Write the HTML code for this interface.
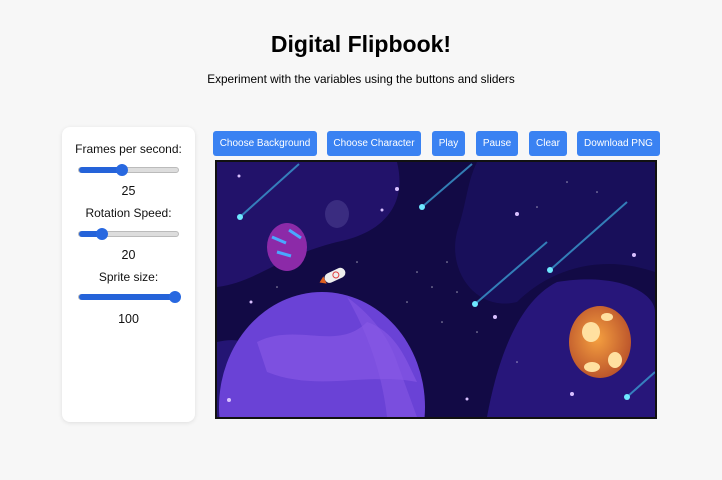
<!DOCTYPE html>
<html style="overflow:hidden"><head><style>
html,body{margin:0;width:722px;height:480px;overflow:hidden}
body{background:#f7f7f7;font-family:"Liberation Sans",Arial,sans-serif;position:relative}
h1{position:absolute;top:31px;left:0;width:722px;text-align:center;margin:0;font-size:23px;font-weight:bold;color:#000}
.sub{position:absolute;top:72px;left:0;width:722px;text-align:center;font-size:11.8px}
.panel{position:absolute;left:62px;top:127px;width:133px;height:295px;background:#fff;border-radius:8px;box-shadow:0 1px 4px rgba(0,0,0,.1)}
.t{position:absolute;left:0;width:133px;text-align:center;font-size:12px;color:#111}
.v{font-size:12.5px}
.tr{position:absolute;left:16px;width:101px;height:6px;border-radius:3px;background:#ddd;border:1px solid #bbb;box-sizing:border-box}
.fill{position:absolute;left:0;top:-1px;height:6px;border-radius:3px;background:#2563d9}
.th{position:absolute;width:12px;height:12px;border-radius:50%;background:#2868e0;top:-4px}
.btn{position:absolute;top:131px;height:25px;background:#3a82f2;color:#fff;font-size:10px;border-radius:3px;line-height:25px;text-align:center}
.cv{position:absolute;left:215px;top:160px;width:438px;height:255px;border:2px solid #111;background:#1c1160;overflow:hidden}
</style></head><body>
<h1>Digital Flipbook!</h1>
<div class="sub">Experiment with the variables using the buttons and sliders</div>
<div class="panel">
<div class="t" style="top:15px">Frames per second:</div>
<div class="tr" style="top:40px"><div class="fill" style="width:44px"></div><div class="th" style="left:37px"></div></div>
<div class="t v" style="top:57px">25</div>
<div class="t" style="top:79px">Rotation Speed:</div>
<div class="tr" style="top:104px"><div class="fill" style="width:24px"></div><div class="th" style="left:17px"></div></div>
<div class="t v" style="top:121px">20</div>
<div class="t" style="top:143px">Sprite size:</div>
<div class="tr" style="top:167px"><div class="fill" style="width:101px"></div><div class="th" style="left:90px"></div></div>
<div class="t v" style="top:185px">100</div>
</div>
<div class="btn" style="left:213px;width:104px">Choose Background</div>
<div class="btn" style="left:327px;width:94px">Choose Character</div>
<div class="btn" style="left:432px;width:33px">Play</div>
<div class="btn" style="left:476px;width:42px">Pause</div>
<div class="btn" style="left:529px;width:38px">Clear</div>
<div class="btn" style="left:577px;width:83px">Download PNG</div>
<div class="cv"><svg width="438" height="255" viewBox="0 0 438 255">
<defs><radialGradient id="o" cx="0.45" cy="0.45" r="0.6"><stop offset="0" stop-color="#f5a040"/><stop offset="1" stop-color="#b8502a"/></radialGradient></defs>
<rect width="438" height="255" fill="#120a45"/>
<path d="M0 0H180C190 40 170 70 120 80 60 95 40 120 0 125Z" fill="#22126a"/>
<path d="M260 0H438V110C380 90 330 110 300 140 260 150 230 110 240 70 250 40 250 20 260 0Z" fill="#1a0f5c" opacity=".9"/>
<path d="M340 120C400 110 438 130 438 150V255H270C280 200 300 140 340 120Z" fill="#27167a"/>
<path d="M0 180C40 170 60 200 50 255H0Z" fill="#241574"/>
<ellipse cx="105" cy="245" rx="103" ry="115" fill="#6a42d6"/>
<path d="M40 180C80 160 120 190 150 160 180 170 190 200 200 220 150 210 100 230 50 210Z" fill="#8a5ae6" opacity=".6"/>
<path d="M130 135C150 150 170 170 180 200L200 255H170C165 210 150 170 130 135Z" fill="#8a5ae6" opacity=".5"/>
<ellipse cx="70" cy="85" rx="20" ry="24" fill="#8c2aa8"/>
<path d="M55 75l14 6M60 90l14 4M72 68l12 8" stroke="#4aa8ff" stroke-width="3"/>
<ellipse cx="120" cy="52" rx="12" ry="14" fill="#3a2c80"/>
<ellipse cx="383" cy="180" rx="31" ry="36" fill="url(#o)"/>
<ellipse cx="374" cy="170" rx="9" ry="10" fill="#ffe0a0"/>
<ellipse cx="398" cy="198" rx="7" ry="8" fill="#ffe0a0"/>
<ellipse cx="375" cy="205" rx="8" ry="5" fill="#ffe0a0"/>
<ellipse cx="390" cy="155" rx="6" ry="4" fill="#ffe0a0"/>
<g stroke="#3a9ad0" stroke-width="2" opacity=".8"><line x1="23" y1="55" x2="82" y2="2"/><line x1="205" y1="45" x2="255" y2="2"/><line x1="333" y1="108" x2="410" y2="40"/><line x1="258" y1="142" x2="330" y2="80"/><line x1="410" y1="235" x2="438" y2="210"/></g>
<g fill="#6ee8ff"><circle cx="23" cy="55" r="3"/><circle cx="205" cy="45" r="3"/><circle cx="333" cy="108" r="3"/><circle cx="258" cy="142" r="3"/><circle cx="410" cy="235" r="3"/></g>
<g transform="translate(108,118) rotate(-25)"><rect x="0" y="-5" width="22" height="10" rx="5" fill="#eee"/><circle cx="12" cy="0" r="3" fill="none" stroke="#e04040"/><path d="M0-4l-6 4 6 4z" fill="#e06020"/></g>
<g fill="#d8c0ff"><circle cx="180" cy="27" r="2"/><circle cx="300" cy="52" r="2"/><circle cx="278" cy="155" r="2"/><circle cx="12" cy="238" r="2"/><circle cx="355" cy="232" r="2"/><circle cx="417" cy="93" r="2"/><circle cx="165" cy="48" r="1.5"/><circle cx="22" cy="14" r="1.5"/><circle cx="34" cy="140" r="1.5"/><circle cx="250" cy="237" r="1.5"/></g>
<g fill="#fff" opacity=".6"><circle cx="200" cy="110" r=".8"/><circle cx="215" cy="125" r=".8"/><circle cx="230" cy="100" r=".8"/><circle cx="240" cy="130" r=".8"/><circle cx="190" cy="140" r=".8"/><circle cx="320" cy="45" r=".8"/><circle cx="350" cy="20" r=".8"/><circle cx="140" cy="100" r=".8"/><circle cx="260" cy="170" r=".8"/><circle cx="300" cy="200" r=".8"/><circle cx="225" cy="160" r=".8"/><circle cx="60" cy="125" r=".8"/><circle cx="380" cy="30" r=".8"/></g>
</svg></div>
</body></html>
